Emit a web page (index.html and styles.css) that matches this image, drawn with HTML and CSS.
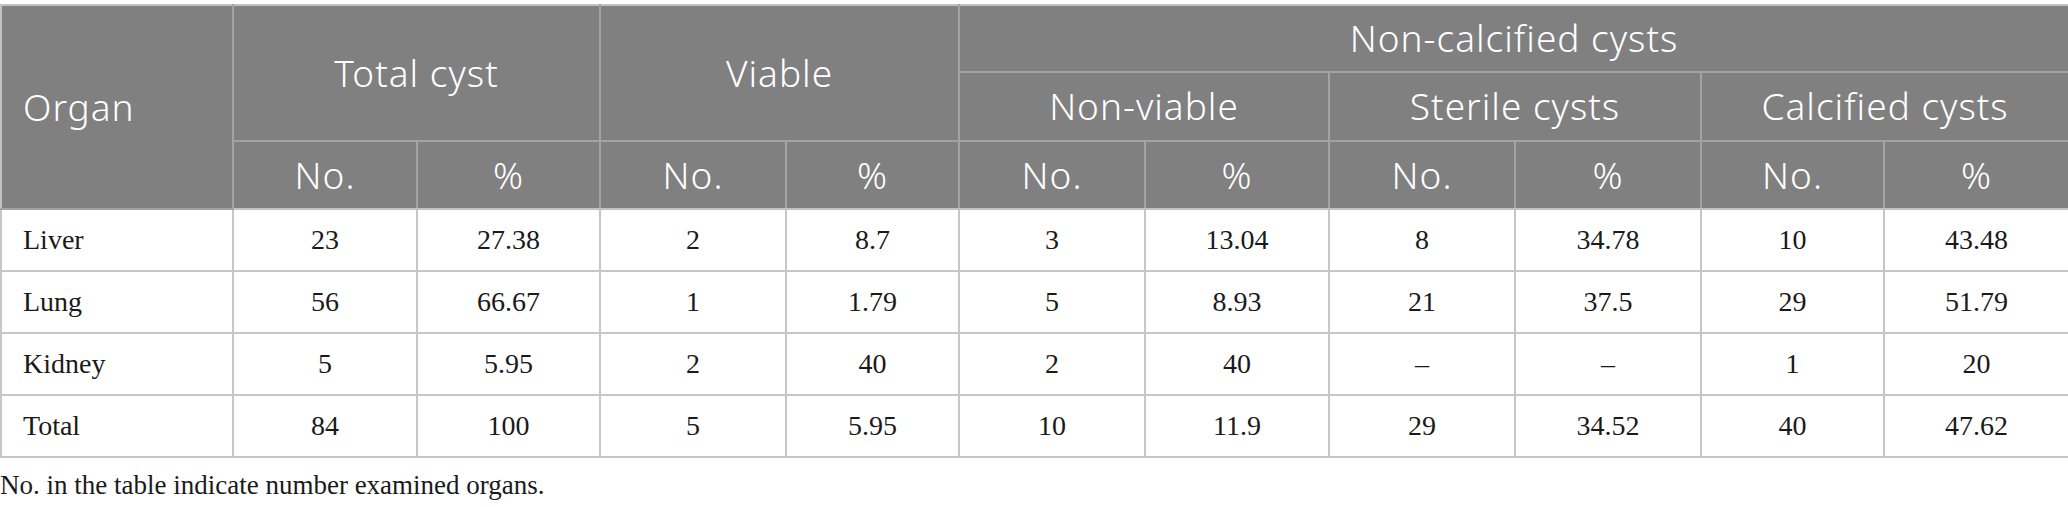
FILE: index.html
```html
<!DOCTYPE html>
<html lang="en">
<head>
<meta charset="utf-8">
<title>Cysts by organ</title>
<link rel="stylesheet" href="styles.css">
</head>
<body>
<div class="wrap">
<table class="data">
<colgroup>
<col class="w-organ"><col class="w184"><col class="w183"><col class="w186"><col class="w173"><col class="w186"><col class="w184"><col class="w186"><col class="w186"><col class="w183"><col class="w185">
</colgroup>
<thead>
<tr class="h1">
<th rowspan="3" class="left">Organ</th>
<th colspan="2" rowspan="2">Total cyst</th>
<th colspan="2" rowspan="2">Viable</th>
<th colspan="6">Non-calcified cysts</th>
</tr>
<tr class="h2">
<th colspan="2">Non-viable</th>
<th colspan="2">Sterile cysts</th>
<th colspan="2">Calcified cysts</th>
</tr>
<tr class="h3">
<th>No.</th><th>%</th><th>No.</th><th>%</th><th>No.</th><th>%</th><th>No.</th><th>%</th><th>No.</th><th>%</th>
</tr>
</thead>
<tbody>
<tr><td class="left">Liver</td><td>23</td><td>27.38</td><td>2</td><td>8.7</td><td>3</td><td>13.04</td><td>8</td><td>34.78</td><td>10</td><td>43.48</td></tr>
<tr><td class="left">Lung</td><td>56</td><td>66.67</td><td>1</td><td>1.79</td><td>5</td><td>8.93</td><td>21</td><td>37.5</td><td>29</td><td>51.79</td></tr>
<tr><td class="left">Kidney</td><td>5</td><td>5.95</td><td>2</td><td>40</td><td>2</td><td>40</td><td>–</td><td>–</td><td>1</td><td>20</td></tr>
<tr><td class="left">Total</td><td>84</td><td>100</td><td>5</td><td>5.95</td><td>10</td><td>11.9</td><td>29</td><td>34.52</td><td>40</td><td>47.62</td></tr>
</tbody>
</table>
<p class="note">No. in the table indicate number examined organs.</p>
</div>
</body>
</html>
```

FILE: styles.css
```css
html, body {
  margin: 0;
  padding: 0;
  background: #ffffff;
}

.wrap {
  padding-top: 4px;
  width: 2068px;
}

.data {
  width: 2068px;
  table-layout: fixed;
  border-collapse: collapse;
  font-family: "Liberation Serif", "Times New Roman", serif;
  font-size: 28px;
  color: #1a1a1a;
}

.w-organ { width: 232px; }
.w184 { width: 184px; }
.w183 { width: 183px; }
.w186 { width: 186px; }
.w173 { width: 173px; }
.w185 { width: 185px; }

.data th {
  background: #7f807f;
  color: #ffffff;
  font-family: "Noto Sans", "Open Sans", sans-serif;
  font-weight: 300;
  font-size: 37px;
  letter-spacing: 1px;
  text-align: center;
  vertical-align: middle;
  border: 2px solid #a3a3a3;
  padding: 0 16px;
  line-height: 1.2;
}

.data thead tr:first-child th {
  border-top-color: #c2c2c2;
}

.data th:first-child {
  border-left-color: #c2c2c2;
}

.data tr.h1 th:last-child,
.data tr.h2 th:last-child,
.data tr.h3 th:last-child {
  border-right-color: #c2c2c2;
}

.data tr.h3 th {
  border-bottom-color: #c2c2c2;
}

.h1 { height: 67px; }
.h2 { height: 69px; }
.h3 { height: 68px; }

.data td {
  border: 2px solid #c6c6c6;
  text-align: center;
  vertical-align: middle;
  height: 60px;
  padding: 0 16px;
}

.data .left {
  text-align: left;
  padding-left: 21px;
}

.note {
  margin: 12px 0 0 0;
  font-family: "Liberation Serif", "Times New Roman", serif;
  font-size: 27px;
  color: #1a1a1a;
}
```
